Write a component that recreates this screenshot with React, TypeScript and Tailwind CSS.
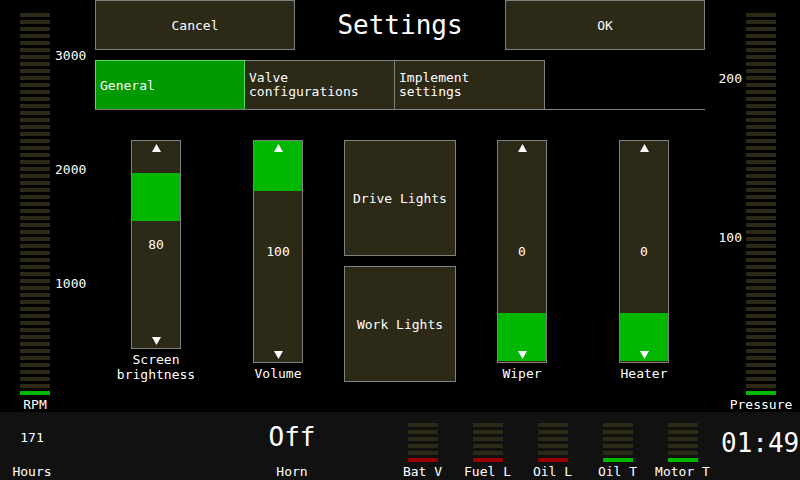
const DIM = "bg-[#2c2a17]";

function BarGauge({ count, last }: { count: number; last: string }) {
  return (
    <div className="flex w-[30px] flex-col gap-[3px]">
      {Array.from({ length: count }).map((_, i) => (
        <div key={i} className={`h-[4px] w-full ${DIM}`} />
      ))}
      <div className={`h-[4px] w-full ${last}`} />
    </div>
  );
}

function UpArrow() {
  return (
    <svg width="9" height="8" viewBox="0 0 9 8" className="block">
      <polygon points="4.5,0 9,8 0,8" fill="#ffffff" />
    </svg>
  );
}

function DownArrow() {
  return (
    <svg width="9" height="8" viewBox="0 0 9 8" className="block">
      <polygon points="0,0 9,0 4.5,8" fill="#ffffff" />
    </svg>
  );
}

function Slider({
  height,
  value,
  handleTop,
  label,
}: {
  height: string;
  value: string;
  handleTop: string;
  label: React.ReactNode;
}) {
  return (
    <div className="flex flex-col items-center">
      <div className={`relative w-[50px] ${height} border border-[#808080] ${DIM}`}>
        <div className={`absolute left-0 right-0 h-[48px] bg-[#00b800] ${handleTop}`} />
        <div className="absolute left-0 right-0 top-[3px] flex justify-center">
          <UpArrow />
        </div>
        <div className="absolute bottom-[3px] left-0 right-0 flex justify-center">
          <DownArrow />
        </div>
        <div className="absolute inset-0 flex items-center justify-center">{value}</div>
      </div>
      <div className="mt-[3px] whitespace-nowrap text-center">{label}</div>
    </div>
  );
}

function MiniGauge({ label, color }: { label: string; color: string }) {
  return (
    <div className="flex w-[65px] flex-col items-center pt-[11px]">
      <div className="flex w-[30px] flex-col gap-[3px]">
        {[0, 1, 2, 3, 4].map((i) => (
          <div key={i} className={`h-[4px] w-full ${DIM}`} />
        ))}
        <div className={`h-[4px] w-full ${color}`} />
      </div>
      <div className="mt-[2px] whitespace-nowrap">{label}</div>
    </div>
  );
}

export default function App() {
  return (
    <div
      className="flex h-[480px] w-[800px] flex-col overflow-hidden bg-black text-[13px] leading-[15px] text-white"
      style={{ fontFamily: '"DejaVu Sans Mono", "Liberation Mono", monospace' }}
    >
      <div className="flex h-[412px]">
        {/* RPM gauge */}
        <div className="relative w-[95px] pl-[20px] pt-[13px]">
          <BarGauge count={54} last="bg-[#00b800]" />
          <div className="mt-[2px] flex w-[30px] justify-center">RPM</div>
          <div className="absolute left-[55px] top-[48px]">3000</div>
          <div className="absolute left-[55px] top-[162px]">2000</div>
          <div className="absolute left-[55px] top-[276px]">1000</div>
        </div>

        {/* center */}
        <div className="flex w-[610px] flex-col">
          <div className="flex h-[50px]">
            <button className={`h-[50px] w-[200px] border border-[#808080] ${DIM}`}>Cancel</button>
            <div className="flex flex-1 items-center justify-center text-[26px]">Settings</div>
            <button className={`h-[50px] w-[200px] border border-[#808080] ${DIM}`}>OK</button>
          </div>

          <div className="mt-[10px] flex h-[50px] border-b border-[#808080]">
            <div className="flex h-[49px] w-[150px] items-center border border-b-0 border-[#55dd55] bg-[#009900] px-[4px]">
              General
            </div>
            <div className={`flex h-[49px] w-[150px] items-center border-r border-t border-[#808080] ${DIM} px-[4px] leading-[14px]`}>
              Valve
              <br />
              configurations
            </div>
            <div className={`flex h-[49px] w-[150px] items-center border-r border-t border-[#808080] ${DIM} px-[4px] leading-[14px]`}>
              Implement
              <br />
              settings
            </div>
          </div>

          <div className="mt-[30px] grid grid-cols-5">
            <Slider
              height="h-[209px]"
              value="80"
              handleTop="top-[32px]"
              label={
                <>
                  Screen
                  <br />
                  brightness
                </>
              }
            />
            <Slider height="h-[223px]" value="100" handleTop="top-0 h-[50px]" label="Volume" />
            <div className="flex flex-col items-center gap-[10px]">
              <button className={`h-[116px] w-[112px] border border-[#808080] ${DIM}`}>Drive Lights</button>
              <button className={`h-[116px] w-[112px] border border-[#808080] ${DIM}`}>Work Lights</button>
            </div>
            <Slider height="h-[223px]" value="0" handleTop="top-[172px]" label="Wiper" />
            <Slider height="h-[223px]" value="0" handleTop="top-[172px]" label="Heater" />
          </div>
        </div>

        {/* Pressure gauge */}
        <div className="relative w-[95px] pl-[41px] pt-[13px]">
          <BarGauge count={54} last="bg-[#00b800]" />
          <div className="mt-[2px] flex w-[30px] justify-center whitespace-nowrap">Pressure</div>
          <div className="absolute right-[58px] top-[71px]">200</div>
          <div className="absolute right-[58px] top-[230px]">100</div>
        </div>
      </div>

      {/* bottom bar */}
      <div className="flex h-[68px] bg-[#111111]">
        <div className="flex w-[64px] flex-col items-center">
          <div className="flex h-[50px] items-center">171</div>
          <div className="mt-[2px]">Hours</div>
        </div>
        <div className="ml-[188px] flex w-[80px] flex-col items-center">
          <div className="flex h-[50px] items-center text-[26px]">Off</div>
          <div className="mt-[2px]">Horn</div>
        </div>
        <div className="ml-[58px] flex">
          <MiniGauge label="Bat V" color="bg-[#990000]" />
          <MiniGauge label="Fuel L" color="bg-[#990000]" />
          <MiniGauge label="Oil L" color="bg-[#990000]" />
          <MiniGauge label="Oil T" color="bg-[#00b800]" />
          <MiniGauge label="Motor T" color="bg-[#00b800]" />
        </div>
        <div className="ml-[6px] pt-[16px] text-[26px] leading-[30px]">01:49</div>
      </div>
    </div>
  );
}
